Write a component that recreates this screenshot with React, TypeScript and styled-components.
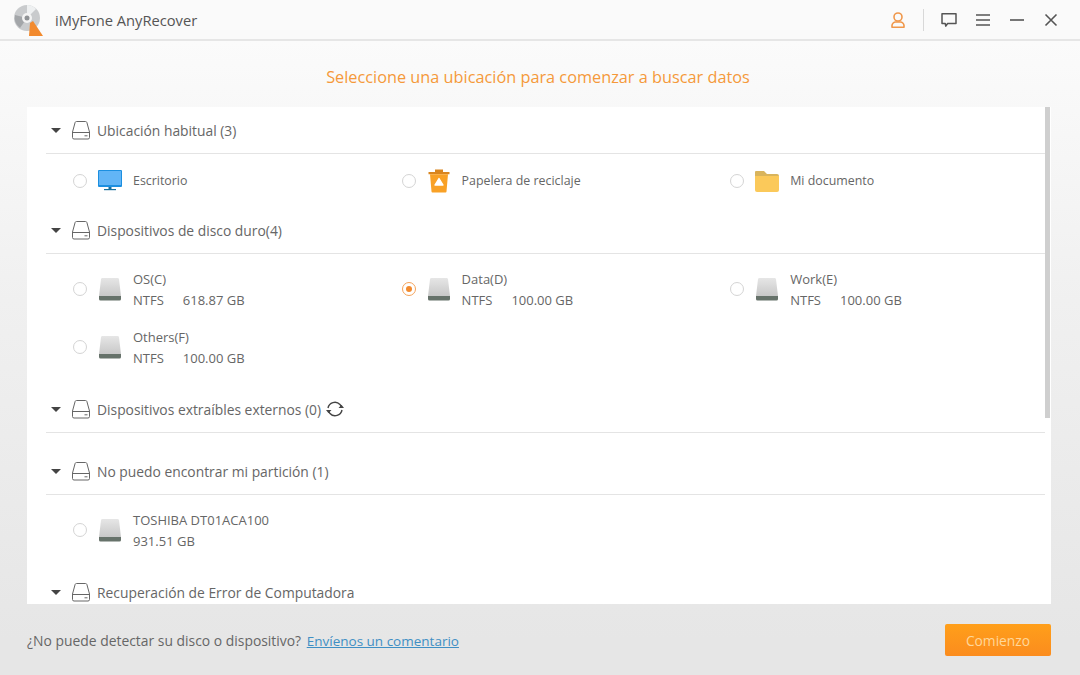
import styled, { createGlobalStyle } from 'styled-components'

const GlobalStyle = createGlobalStyle`
  html, body {
    margin: 0;
    padding: 0;
    height: 100%;
    overflow: hidden;
  }

  body {
    font-family: 'Open Sans', 'Noto Sans', 'Liberation Sans', sans-serif;
    color: #666;
  }
`

const Window = styled.div`
  display: flex;
  flex-direction: column;
  width: 1080px;
  height: 675px;
  background: linear-gradient(#fbfbfb 40px, #f0f0f0 300px, #e6e6e6 640px);
`

const TitleBar = styled.header`
  display: flex;
  align-items: center;
  flex: none;
  height: 39px;
  padding: 0 12px 0 13px;
  background: #fafafa;
  border-bottom: 2px solid #e6e6e6;
`

const AppName = styled.span`
  flex: 1;
  margin-left: 11px;
  font-size: 14.7px;
  color: #555;
`

const TitleActions = styled.div`
  display: flex;
  align-items: center;
`

const ActionSlot = styled.span`
  display: flex;
  justify-content: center;
  width: 34px;
`

const Divider = styled.span`
  width: 1px;
  height: 22px;
  margin: 0 8px;
  background: #d8d8d8;
`

const Heading = styled.h1`
  flex: none;
  margin: 0;
  padding-right: 4px;
  height: 66px;
  line-height: 72px;
  font-size: 16.3px;
  font-weight: 400;
  text-align: center;
  color: #f5993a;
`

const Panel = styled.main`
  position: relative;
  flex: none;
  height: 497px;
  margin: 0 29px 0 27px;
  padding: 0 6px 0 19px;
  background: #fff;
  overflow: hidden;
`

const ScrollThumb = styled.div`
  position: absolute;
  top: 0;
  right: 1px;
  width: 5px;
  height: 311px;
  background: #cfcfcf;
`

const SectionHeader = styled.div`
  display: flex;
  align-items: center;
  height: 46px;
  border-bottom: 1px solid #e4e4e4;
  font-size: 13.85px;
  color: #666;
`

const Caret = styled.span`
  width: 0;
  height: 0;
  margin: 0 10px 0 5px;
  border-left: 5px solid transparent;
  border-right: 5px solid transparent;
  border-top: 5px solid #444;
`

const SectionTitle = styled.span`
  margin: 1px 0 0 6px;
`

const RefreshButton = styled.span`
  display: flex;
  margin-left: 4px;
`

const SectionBody = styled.div<{ $top: number; $bottom: number }>`
  display: grid;
  grid-template-columns: repeat(3, 328.6px);
  padding: ${p => p.$top}px 0 ${p => p.$bottom}px 27px;
`

const Item = styled.div<{ $height: number }>`
  display: flex;
  align-items: center;
  height: ${p => p.$height}px;
`

const Radio = styled.span<{ $checked?: boolean }>`
  display: flex;
  align-items: center;
  justify-content: center;
  flex: none;
  box-sizing: border-box;
  width: 14px;
  height: 14px;
  margin-right: 11px;
  border-radius: 50%;
  border: 1px solid ${p => (p.$checked ? '#f5a35a' : '#d4d4d4')};

  &::after {
    content: '';
    display: ${p => (p.$checked ? 'block' : 'none')};
    width: 6px;
    height: 6px;
    border-radius: 50%;
    background: #f28a2e;
  }
`

const ItemIcon = styled.span`
  display: flex;
  justify-content: center;
  flex: none;
  width: 24px;
  margin-right: 11px;
`

const PlainLabel = styled.div`
  font-size: 12.4px;
  line-height: 21px;
  color: #666;
`

const DriveLabel = styled.div`
  padding-top: 1px;
  font-size: 13px;
  line-height: 21px;
  color: #666;
`

const ItemSize = styled.span`
  margin-left: 19px;
`

const Footer = styled.footer`
  display: flex;
  align-items: center;
  justify-content: space-between;
  flex: 1;
  padding: 1px 29px 0 27px;
  font-size: 13.9px;
  color: #666;
`

const FeedbackLink = styled.a`
  margin-left: 2px;
  color: #3f8fc4;
  font-size: 13.5px;
  text-decoration: underline;
`

const StartButton = styled.button`
  width: 106px;
  height: 32px;
  padding: 0;
  border: 0;
  border-radius: 2px;
  background: linear-gradient(#ff9f1a, #fb8c1e);
  color: #ffd79a;
  font: inherit;
  font-size: 13.8px;
`

function Logo() {
  return (
    <svg width="31" height="34" viewBox="0 0 31 34">
      <circle cx="14" cy="15" r="13" fill="#c9cbcd" />
      <path d="M14 2a13 13 0 0 1 9 4l-9 9z" fill="#eef0f1" />
      <path d="M2 12a13 13 0 0 0 5 13l7-10z" fill="#a3a6a9" />
      <circle cx="14" cy="15" r="5" fill="#f4f4f4" />
      <circle cx="14" cy="15" r="2.5" fill="#8f9295" />
      <path d="M17 20l3-2 10 15H16z" fill="#f28a2e" />
    </svg>
  )
}

function UserIcon() {
  return (
    <svg width="18" height="18" viewBox="0 0 18 18" fill="none" stroke="#f0974a" strokeWidth="1.6">
      <circle cx="9" cy="6" r="4" />
      <path d="M3 16.200v-1.700c0-2 2-3.500 3.500-3.500h5c1.500 0 3.500 1.500 3.500 3.500v1.700z" strokeLinejoin="round" />
    </svg>
  )
}

function ChatIcon() {
  return (
    <svg width="16" height="16" viewBox="0 0 16 16" fill="none" stroke="#555" strokeWidth="1.5">
      <path d="M1 1.800h14v9.700H6.600L4.800 14.200l-.6-2.700H1z" strokeLinejoin="round" />
    </svg>
  )
}

function MenuIcon() {
  return (
    <svg width="14" height="14" viewBox="0 0 14 14" stroke="#555" strokeWidth="1.6">
      <path d="M0 2h14M0 7h14M0 12h14" />
    </svg>
  )
}

function MinimizeIcon() {
  return (
    <svg width="14" height="14" viewBox="0 0 14 14" stroke="#555" strokeWidth="1.6">
      <path d="M0 7h14" />
    </svg>
  )
}

function CloseIcon() {
  return (
    <svg width="14" height="14" viewBox="0 0 14 14" stroke="#555" strokeWidth="1.6">
      <path d="M1.500 1.500l11 11M12.500 1.500l-11 11" />
    </svg>
  )
}

function DriveOutline() {
  return (
    <svg width="20" height="20" viewBox="0 0 20 20" fill="none" stroke="#666" strokeWidth="1">
      <path d="M5.500 1.500h9a1.500 1.500 0 0 1 1.400 1l2.600 9.500v5.500a1.500 1.500 0 0 1-1.500 1.500H3a1.500 1.500 0 0 1-1.500-1.500V12l2.600-9.500a1.500 1.500 0 0 1 1.400-1z" strokeLinejoin="round" />
      <path d="M1.500 12.500h17M13.500 15.800h3" />
    </svg>
  )
}

function RefreshIcon() {
  return (
    <svg width="20" height="18" viewBox="0 0 20 18" fill="none" stroke="#444" strokeWidth="1.400">
      <path d="M3 8a7 7 0 0 1 12-3.500l1.500 2.500M17 10a7 7 0 0 1-12 3.500L3.500 11" />
      <path d="M13.500 8h5.500l-2.500-3.200zM6.500 10H1l2.500 3.200z" fill="#444" stroke="none" />
    </svg>
  )
}

function MonitorIcon() {
  return (
    <svg width="24" height="21" viewBox="0 0 24 21">
      <rect x="0" y="0" width="24" height="17" rx="1" fill="#1c8fe0" />
      <rect x="1" y="1" width="22" height="14" fill="#62b5f6" />
      <rect x="10.500" y="17" width="3" height="2" fill="#16709f" />
      <rect x="6" y="19" width="12" height="1.200" fill="#16709f" />
    </svg>
  )
}

function TrashIcon() {
  return (
    <svg width="22" height="24" viewBox="0 0 22 24">
      <path d="M0.500 3h21v2.200H0.500zM7 0.500h8v2.500H7z" fill="#d9851e" />
      <path d="M2 5.200h18l-1.500 17.300a1 1 0 0 1-1 1h-13a1 1 0 0 1-1-1z" fill="#f9a126" />
      <path d="M11 9.500l4 6.500h-8z" fill="#fff" stroke="#fff" strokeWidth="1.400" strokeLinejoin="round" />
    </svg>
  )
}

function FolderIcon() {
  return (
    <svg width="24" height="22" viewBox="0 0 24 22">
      <path d="M1 1h8l3 3h10a2 2 0 0 1 2 2v3H0V2a1 1 0 0 1 1-1z" fill="#d9b45c" />
      <path d="M0 6h24v14a2 2 0 0 1-2 2H2a2 2 0 0 1-2-2z" fill="#fbc95a" />
    </svg>
  )
}

function DiskIcon() {
  return (
    <svg width="24" height="24" viewBox="0 0 24 24">
      <defs>
        <linearGradient id="diskBody" x1="0" y1="0" x2="0" y2="1">
          <stop offset="0" stopColor="#e6e6e6" />
          <stop offset="1" stopColor="#c8c8c8" />
        </linearGradient>
      </defs>
      <path d="M4.500 1h15a1.500 1.500 0 0 1 1.500 1.300L23 19H1L3 2.300A1.500 1.500 0 0 1 4.500 1z" fill="url(#diskBody)" />
      <path d="M1 19h22v3a1.500 1.500 0 0 1-1.500 1.500h-19A1.500 1.500 0 0 1 1 22z" fill="#66726a" />
    </svg>
  )
}

type Drive = { name: string; fs?: string; size?: string; checked?: boolean }

const drives: Drive[] = [
  { name: 'OS(C)', fs: 'NTFS', size: '618.87 GB' },
  { name: 'Data(D)', fs: 'NTFS', size: '100.00 GB', checked: true },
  { name: 'Work(E)', fs: 'NTFS', size: '100.00 GB' },
  { name: 'Others(F)', fs: 'NTFS', size: '100.00 GB' },
]

function SectionHead({ title, refresh }: { title: string; refresh?: boolean }) {
  return (
    <SectionHeader>
      <Caret />
      <DriveOutline />
      <SectionTitle>{title}</SectionTitle>
      {refresh && (
        <RefreshButton>
          <RefreshIcon />
        </RefreshButton>
      )}
    </SectionHeader>
  )
}

function PlainItem({ icon, label }: { icon: React.ReactNode; label: string }) {
  return (
    <Item $height={53}>
      <Radio />
      <ItemIcon>{icon}</ItemIcon>
      <PlainLabel>{label}</PlainLabel>
    </Item>
  )
}

function DriveItem({ drive }: { drive: Drive }) {
  return (
    <Item $height={58}>
      <Radio $checked={drive.checked} />
      <ItemIcon>
        <DiskIcon />
      </ItemIcon>
      <DriveLabel>
        <div>{drive.name}</div>
        <div>
          {drive.fs}
          <ItemSize>{drive.size}</ItemSize>
        </div>
      </DriveLabel>
    </Item>
  )
}

export default function App() {
  return (
    <>
      <GlobalStyle />
      <Window>
        <TitleBar>
          <Logo />
          <AppName>iMyFone AnyRecover</AppName>
          <TitleActions>
            <ActionSlot>
              <UserIcon />
            </ActionSlot>
            <Divider />
            <ActionSlot>
              <ChatIcon />
            </ActionSlot>
            <ActionSlot>
              <MenuIcon />
            </ActionSlot>
            <ActionSlot>
              <MinimizeIcon />
            </ActionSlot>
            <ActionSlot>
              <CloseIcon />
            </ActionSlot>
          </TitleActions>
        </TitleBar>

        <Heading>Seleccione una ubicación para comenzar a buscar datos</Heading>

        <Panel>
          <ScrollThumb />

          <SectionHead title="Ubicación habitual (3)" />
          <SectionBody $top={0} $bottom={0}>
            <PlainItem icon={<MonitorIcon />} label="Escritorio" />
            <PlainItem icon={<TrashIcon />} label="Papelera de reciclaje" />
            <PlainItem icon={<FolderIcon />} label="Mi documento" />
          </SectionBody>

          <SectionHead title="Dispositivos de disco duro(4)" />
          <SectionBody $top={6} $bottom={10}>
            {drives.map(drive => (
              <DriveItem key={drive.name} drive={drive} />
            ))}
          </SectionBody>

          <SectionHead title="Dispositivos extraíbles externos (0)" refresh />
          <SectionBody $top={15} $bottom={0} />

          <SectionHead title="No puedo encontrar mi partición (1)" />
          <SectionBody $top={6} $bottom={10}>
            <Item $height={58}>
              <Radio />
              <ItemIcon>
                <DiskIcon />
              </ItemIcon>
              <DriveLabel>
                <div>TOSHIBA DT01ACA100</div>
                <div>931.51 GB</div>
              </DriveLabel>
            </Item>
          </SectionBody>

          <SectionHead title="Recuperación de Error de Computadora" />
        </Panel>

        <Footer>
          <span>
            ¿No puede detectar su disco o dispositivo? <FeedbackLink>Envíenos un comentario</FeedbackLink>
          </span>
          <StartButton>Comienzo</StartButton>
        </Footer>
      </Window>
    </>
  )
}
